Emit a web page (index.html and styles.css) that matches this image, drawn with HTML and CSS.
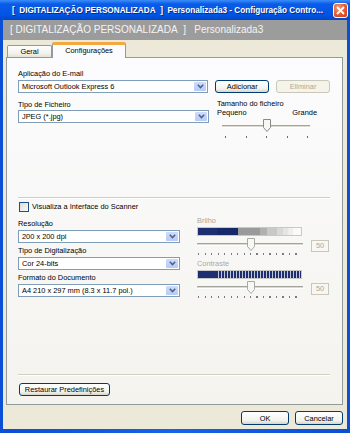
FILE: index.html
```html
<!DOCTYPE html>
<html lang="pt">
<head>
    <meta charset="UTF-8">
    <title>Digitalização Personalizada</title>
    <link rel="stylesheet" href="styles.css">
</head>
<body>

    <!-- Window -->
    <div class="window">
        <!-- Title bar -->
        <div class="titlebar">
            <span class="title">[&nbsp;&nbsp;DIGITALIZAÇÃO PERSONALIZADA&nbsp;&nbsp;]&nbsp;&nbsp;Personalizada3 - Configuração Contro...</span>
            <span class="close">
                <svg width="9" height="9" viewBox="0 0 9 9"><path d="M1 1 L8 8 M8 1 L1 8" stroke="#fff" stroke-width="1.8"/></svg>
            </span>
        </div>

        <div class="client">
            <!-- Grey banner -->
            <div class="banner">[&nbsp;DIGITALIZAÇÃO PERSONALIZADA&nbsp;&nbsp;]&nbsp;&nbsp;&nbsp;Personalizada3</div>

            <!-- Tabs -->
            <div class="tabs">
                <div class="tab">Geral</div>
                <div class="tab active">Configurações</div>
            </div>

            <!-- Tab panel -->
            <div class="panel">
                <div class="sec-top">
                    <div class="label lbl-first">Aplicação do E-mail</div>
                    <div class="row">
                        <div class="combo w-wide"><span class="value">Microsoft Outlook Express 6</span><span class="drop"><svg width="7" height="5" viewBox="0 0 7 5"><path d="M0.8 0.8 L3.5 3.6 L6.2 0.8" fill="none" stroke="#4d6185" stroke-width="1.5"/></svg></span></div>
                        <button class="btn btn-add">Adicionar</button>
                        <button class="btn btn-del" disabled>Eliminar</button>
                    </div>
                    <div class="row row-file">
                        <div class="col-file">
                            <div class="label">Tipo de Ficheiro</div>
                            <div class="combo w-wide"><span class="value">JPEG (*.jpg)</span><span class="drop"><svg width="7" height="5" viewBox="0 0 7 5"><path d="M0.8 0.8 L3.5 3.6 L6.2 0.8" fill="none" stroke="#4d6185" stroke-width="1.5"/></svg></span></div>
                        </div>
                        <div class="col-size">
                            <div class="label">Tamanho do ficheiro</div>
                            <div class="label size-scale"><span>Pequeno</span><span>Grande</span></div>
                            <div class="slider slider-size">
                                <div class="track"></div>
                                <svg class="thumb" style="left: 41px" width="8" height="13" viewBox="0 0 8 13"><path d="M0.5 0.5 H7.5 V8.5 L4 12.5 L0.5 8.5 Z" fill="#f7f7f4" stroke="#8a8a86"/></svg>
                                <div class="ticks ticks-size"></div>
                            </div>
                        </div>
                    </div>
                </div>

                <div class="sep"></div>

                <div class="check-row">
                    <span class="checkbox"></span>
                    <span>Visualiza a Interface do Scanner</span>
                </div>

                <div class="row row-scan">
                    <div class="col-scan">
                        <div class="label">Resolução</div>
                        <div class="combo w-narrow"><span class="value">200 x 200 dpi</span><span class="drop"><svg width="7" height="5" viewBox="0 0 7 5"><path d="M0.8 0.8 L3.5 3.6 L6.2 0.8" fill="none" stroke="#4d6185" stroke-width="1.5"/></svg></span></div>
                        <div class="label">Tipo de Digitalização</div>
                        <div class="combo w-narrow"><span class="value">Cor 24-bits</span><span class="drop"><svg width="7" height="5" viewBox="0 0 7 5"><path d="M0.8 0.8 L3.5 3.6 L6.2 0.8" fill="none" stroke="#4d6185" stroke-width="1.5"/></svg></span></div>
                        <div class="label">Formato do Documento</div>
                        <div class="combo w-narrow"><span class="value">A4 210 x 297 mm (8.3 x 11.7 pol.)</span><span class="drop"><svg width="7" height="5" viewBox="0 0 7 5"><path d="M0.8 0.8 L3.5 3.6 L6.2 0.8" fill="none" stroke="#4d6185" stroke-width="1.5"/></svg></span></div>
                    </div>

                    <div class="col-adjust">
                        <div class="label muted">Brilho</div>
                        <div class="bar bar-bright"></div>
                        <div class="adjust-row">
                            <div class="slider slider-adjust">
                                <div class="track"></div>
                                <svg class="thumb" style="left: 50px" width="8" height="13" viewBox="0 0 8 13"><path d="M0.5 0.5 H7.5 V8.5 L4 12.5 L0.5 8.5 Z" fill="#f7f7f4" stroke="#a8a8a4"/></svg>
                                <div class="ticks ticks-adjust"></div>
                            </div>
                            <div class="edit">50</div>
                        </div>

                        <div class="label muted lbl-contrast">Contraste</div>
                        <div class="bar bar-contrast"></div>
                        <div class="adjust-row">
                            <div class="slider slider-adjust">
                                <div class="track"></div>
                                <svg class="thumb" style="left: 50px" width="8" height="13" viewBox="0 0 8 13"><path d="M0.5 0.5 H7.5 V8.5 L4 12.5 L0.5 8.5 Z" fill="#f7f7f4" stroke="#a8a8a4"/></svg>
                                <div class="ticks ticks-adjust"></div>
                            </div>
                            <div class="edit">50</div>
                        </div>
                    </div>
                </div>

                <div class="sep sep-bottom"></div>
                <div class="restore-row">
                    <button class="btn btn-restore">Restaurar Predefinições</button>
                </div>
            </div>

            <!-- Dialog buttons -->
            <div class="footer">
                <button class="btn btn-ok">OK</button>
                <button class="btn btn-cancel">Cancelar</button>
            </div>
        </div>
    </div>

</body>
</html>
```

FILE: styles.css
```css
/* General */
body {
    margin: 0;
    padding: 0;
    font-family: "Liberation Sans", Arial, sans-serif;
    font-size: 7.4px;
    color: #000;
    background: #fff;
}

/* Window frame */
.window {
    width: 350px;
    height: 433px;
    box-sizing: border-box;
    display: flex;
    flex-direction: column;
    background: linear-gradient(to right, #0a4fd6, #1662e8 50%, #0a4fd6);
    padding: 0 3px 4px 3px;
}

.titlebar {
    height: 20px;
    margin: 0 -3px;
    padding: 0 2px 0 12px;
    display: flex;
    align-items: center;
    justify-content: space-between;
    background: linear-gradient(#3d8ef8, #0a5ce8 20%, #0054e3 75%, #0046c8);
    color: #fff;
}

.title {
    font-weight: bold;
    font-size: 8.2px;
    white-space: nowrap;
    text-shadow: 1px 1px 0 #0a2a8a;
}

.close {
    width: 15px;
    height: 15px;
    box-sizing: border-box;
    border: 1px solid #fff;
    border-radius: 3px;
    background: radial-gradient(circle at 35% 30%, #f29b7c, #e0552b 60%, #c2411c);
    display: flex;
    align-items: center;
    justify-content: center;
}

.client {
    flex: 1;
    display: flex;
    flex-direction: column;
    background: #ece9d8;
}

/* Grey banner */
.banner {
    height: 20px;
    line-height: 20px;
    padding-left: 7px;
    background: #9c9c9c;
    color: #f4f4f4;
    font-size: 10px;
    white-space: nowrap;
}

/* Tabs */
.tabs {
    height: 17px;
    display: flex;
    align-items: flex-end;
    padding-left: 4px;
    position: relative;
    z-index: 1;
}

.tab {
    height: 12px;
    width: 45px;
    box-sizing: border-box;
    border: 1px solid #919b9c;
    border-bottom: none;
    border-radius: 2px 2px 0 0;
    background: linear-gradient(#fefefe, #f1f0ea 70%, #e3e1d8);
    text-align: center;
    line-height: 12px;
}

.tab.active {
    width: 74px;
    height: 16px;
    margin-bottom: -1px;
    border-top: 3px solid #f3a840;
    background: #fcfcfe;
    line-height: 11px;
}

/* Tab panel */
.panel {
    height: 348px;
    margin: 0 4px 0 3px;
    box-sizing: border-box;
    border: 1px solid #919b9c;
    background: linear-gradient(#fcfcfe, #f4f3ee);
    padding: 0 12px 8px 11px;
    display: flex;
    flex-direction: column;
}

.label {
    height: 9px;
    line-height: 9px;
    white-space: nowrap;
}

.muted {
    color: #aca899;
}

.row {
    display: flex;
}

.sec-top {
    height: 139px;
}

.lbl-first {
    margin-top: 11px;
    margin-bottom: 2px;
}

/* Combo boxes */
.combo {
    height: 13px;
    box-sizing: border-box;
    border: 1px solid #7f9db9;
    background: #fff;
    display: flex;
    align-items: center;
}

.w-wide {
    width: 191px;
}

.w-narrow {
    width: 162px;
}

.combo .value {
    flex: 1;
    padding-left: 3px;
    white-space: nowrap;
    overflow: hidden;
}

.combo .drop {
    width: 12px;
    height: 9px;
    margin-right: 1px;
    border-radius: 1px;
    background: linear-gradient(#cddcfc, #b6cbf7);
    display: flex;
    align-items: center;
    justify-content: center;
}

/* Buttons */
.btn {
    height: 13px;
    padding: 0;
    font-family: inherit;
    font-size: inherit;
    color: #000;
    border: 1px solid #003c74;
    border-radius: 3px;
    background: linear-gradient(#ffffff, #f3f3ee 70%, #d8d4c8);
    line-height: 11px;
}

.btn:disabled {
    color: #aca899;
    border-color: #c9c7ba;
    background: #f5f4ea;
}

.btn-add {
    width: 54px;
    margin-left: 7px;
}

.btn-del {
    width: 54px;
    margin-left: 7px;
}

.row-file {
    margin-top: 6px;
}

.col-file .label {
    margin: 1px 0 1px;
}

.col-size {
    width: 100px;
    margin-left: 8px;
}

.size-scale {
    display: flex;
    justify-content: space-between;
}

/* Sliders */
.slider {
    position: relative;
}

.slider .track {
    position: absolute;
    left: 0;
    right: 0;
    height: 1px;
    border-top: 1px solid #a4a39c;
    border-bottom: 1px solid #fff;
    background: #dcdad0;
}

.slider .thumb {
    position: absolute;
    top: 0;
}

.slider .ticks {
    position: absolute;
    height: 2px;
}

.slider-size {
    width: 88px;
    height: 20px;
    margin: 2px 0 0 5px;
}

.slider-size .track {
    top: 6px;
}

.ticks-size {
    top: 17px;
    left: 3px;
    width: 84px;
    background: repeating-linear-gradient(to right, #6b6b6b 0 1px, transparent 1px 20.6px);
}

/* Separators */
.sep {
    width: 312px;
    height: 0;
    border-top: 1px solid #d0d0bf;
    border-bottom: 1px solid #fff;
}

.sep-bottom {
    margin-top: auto;
}

.check-row {
    margin-top: 3px;
    height: 10px;
    display: flex;
    align-items: center;
    gap: 3px;
    line-height: 10px;
}

.checkbox {
    width: 10px;
    height: 10px;
    margin-left: 1px;
    box-sizing: border-box;
    border: 1px solid #1c5180;
    background: linear-gradient(135deg, #dcdcd7, #fbfbf9);
}

/* Scan settings */
.row-scan {
    margin-top: 4px;
}

.col-scan {
    width: 162px;
    padding-top: 3px;
}

.col-scan .label {
    margin-bottom: 2px;
}

.col-scan .combo {
    margin-bottom: 3px;
}

.col-adjust {
    width: 133px;
    margin-left: 17px;
}

.bar {
    width: 105px;
    height: 9px;
    box-sizing: border-box;
    border: 1px solid #c8c8c8;
    margin-top: 2px;
}

.bar-bright {
    background: linear-gradient(to right,
        #1d2f70 0 19px, #17296a 19px 40px,
        #9a9a9a 40px 62px, #b1b1b1 62px 69px,
        #c9c9c9 69px 79px, #d9d9d9 79px 85px,
        #e5e5e5 85px 90px, #efefef 90px 95px, #fafafa 95px);
}

.bar-contrast {
    background:
        linear-gradient(to right, #1d2f70 0 20px, transparent 20px),
        repeating-linear-gradient(to right, #1d2f70 0 2px, #c4c7d4 2px 3px);
}

.adjust-row {
    display: flex;
    margin-top: 2px;
}

.slider-adjust {
    width: 106px;
    height: 18px;
}

.slider-adjust .track {
    top: 5px;
}

.ticks-adjust {
    top: 15px;
    left: 1px;
    width: 104px;
    background: repeating-linear-gradient(to right, #7a7a7a 0 1px, transparent 1px 6.5px);
}

.edit {
    width: 18px;
    height: 12px;
    margin: 2px 0 0 8px;
    box-sizing: border-box;
    border: 1px solid #c9c7ba;
    color: #aca899;
    text-align: center;
    line-height: 10px;
}

.lbl-contrast {
    margin-top: 3px;
}

/* Bottom of panel */
.restore-row {
    margin-top: 7px;
}

.btn-restore {
    width: 91px;
    margin-left: 1px;
}

/* Dialog buttons */
.footer {
    display: flex;
    justify-content: flex-end;
    gap: 6px;
    padding: 6px 4px 0 0;
}

.btn-ok,
.btn-cancel {
    width: 48px;
    height: 14px;
}
```
